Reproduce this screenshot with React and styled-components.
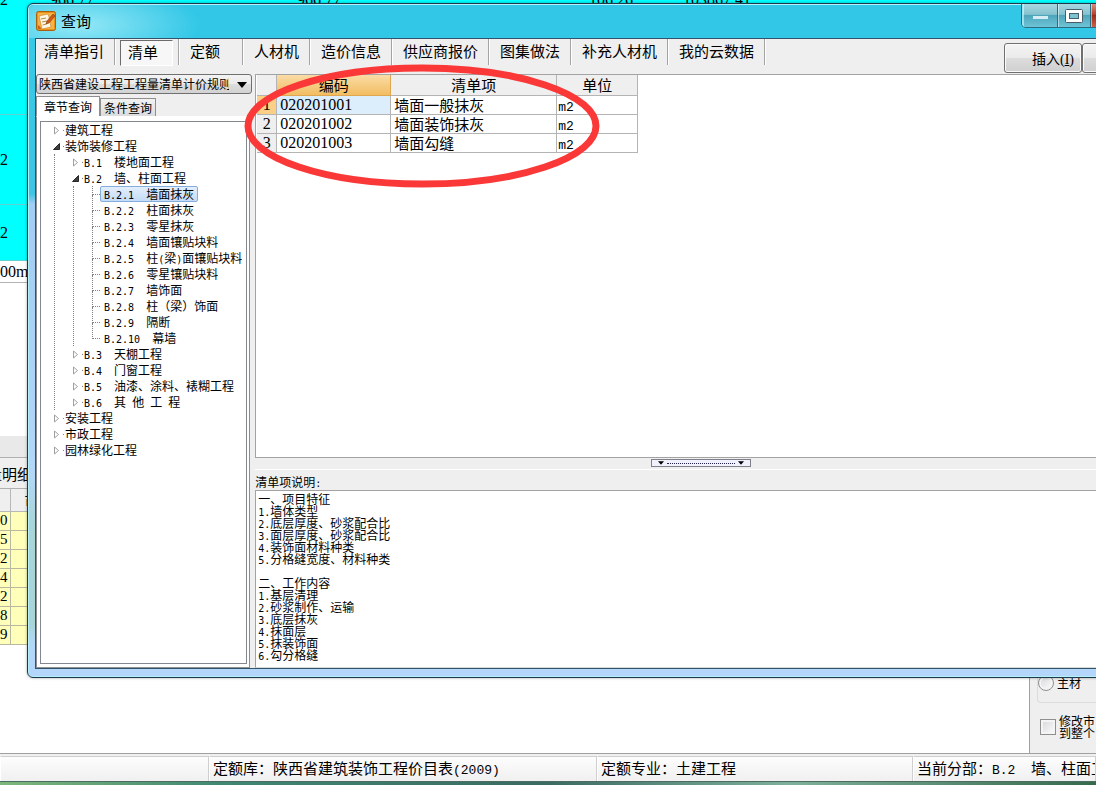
import React, { useState } from 'react';
import styled, { createGlobalStyle } from 'styled-components';

const GlobalStyle = createGlobalStyle`
  * {
    box-sizing: border-box;
  }

  body {
    margin: 0;
    color: #000;
    font-family: 'Noto Sans CJK SC', sans-serif;
    font-weight: 400;
    font-size: 12px;
  }

  button, select {
    font: inherit;
    color: inherit;
  }

  ul {
    list-style: none;
    margin: 0;
    padding: 0;
  }
`;

// Half-width characters: narrow fixed pitch beside the square CJK glyphs
const Half = styled.span`
  font-family: ${props => (props.$large ? "'Liberation Mono', monospace" : "'DejaVu Sans Mono', monospace")};
  font-size: ${props => (props.$large ? '13px' : '10px')};
  line-height: 1;
  white-space: pre;
`;

function Mixed({ text, large }) {
  const parts = text.split(/([\x20-\x7e]+)/).filter(Boolean);
  return parts.map((part, i) => (
    /^[\x20-\x7e]/.test(part) ? <Half key={i} $large={large}>{part}</Half> : part
  ));
}

/* ---------- main window behind the dialog ---------- */

const Desktop = styled.div`
  position: relative;
  display: flex;
  flex-direction: column;
  min-height: 100vh;
  overflow: hidden;
  background: #fff;
`;

const SheetStrip = styled.div`
  display: flex;
  height: 24px;
  margin-top: -12px;
  background: #00ffff;
  font: 16px/24px 'Liberation Serif', serif;
  white-space: nowrap;
`;

const StripCell = styled.span`
  flex: 0 0 ${props => props.$width}px;
`;

const SheetRow = styled.div`
  display: flex;
  align-items: center;
  height: ${props => props.$height}px;
  background: ${props => (props.$plain ? '#fff' : '#00ffff')};
  border-bottom: 1px solid ${props => (props.$plain ? '#b4b4b4' : '#5fd3d3')};
  font: 16px 'Liberation Serif', serif;
`;

const Filler = styled.div`
  flex: 1;
`;

const Band = styled.div`
  height: 22px;
  background: #e9e9e9;
  border-bottom: 1px solid #b0b0b0;
`;

const DetailTitle = styled.div`
  display: flex;
  align-items: center;
  height: 31px;
  background: #efefef;
  border-bottom: 1px solid #b0b0b0;
  font-size: 15px;
  text-indent: -13px;
`;

const Lower = styled.div`
  display: flex;
  height: 265px;
  border-bottom: 1px solid #a0a0a0;
`;

const DetailArea = styled.div`
  flex: 1;
  border-right: 1px solid #a0a0a0;
`;

const DetailTable = styled.table`
  border-collapse: collapse;
  table-layout: fixed;
  width: 90px;
  font: 15px 'Liberation Serif', serif;

  th {
    height: 22px;
    padding: 0 0 0 14px;
    background: #efefef;
    border: 1px solid #b8b8b8;
    border-width: 0 1px 1px 0;
    font: 15px 'Noto Sans CJK SC', sans-serif;
    line-height: 20px;
    text-align: left;
  }

  td {
    height: 19px;
    padding: 0;
    background: #ffffb9;
    border: 1px solid #b8b8a0;
    border-width: 0 1px 1px 0;
    line-height: 17px;
  }

  th:first-child {
    width: 10px;
    padding: 0;
  }
`;

const SidePanel = styled.div`
  display: flex;
  flex-direction: column;
  justify-content: flex-end;
  width: 66px;
  padding: 0 0 14px 7px;
  background: #efefef;
  white-space: nowrap;
`;

const RadioGroup = styled.div`
  padding-bottom: 11px;
  border: 1px solid #dcdcdc;
  border-width: 0 0 1px 1px;
  border-radius: 0 0 0 4px;
`;

const Choice = styled.label`
  display: flex;
  align-items: center;
  gap: 3px;
  line-height: 12px;

  input {
    flex: none;
    appearance: none;
    width: 16px;
    height: 16px;
    margin: 0;
    border: 1px solid #8e8f8f;
    border-radius: ${props => (props.$round ? '8px' : '0')};
    background: linear-gradient(135deg, #d3d6da, #fdfdfd);
    box-shadow: inset 0 0 0 2px #f4f4f4;
  }
`;

const CheckArea = styled.div`
  padding: 12px 0 0 3px;
`;

const StatusBar = styled.footer`
  display: grid;
  grid-template-columns: 209fr 388fr 316fr 183fr;
  height: 28px;
  padding-top: 2px;
  background: #f0f0f0;
  border-bottom: 1px solid #4c6c62;
  font-size: 15px;
`;

const StatusCell = styled.div`
  min-width: 0;
  overflow: hidden;
  padding-left: 3px;
  border: 1px solid #cfcfcf;
  border-left-color: #fff;
  border-bottom: 0;
  background: linear-gradient(#fdfdfd, #f0f0f0);
  line-height: 22px;
  white-space: nowrap;
`;

const DesktopEdge = styled.div`
  height: 3px;
  background: linear-gradient(90deg, #7fb77a, #3f8873 20%, #3a6a62 50%, #7fb09b 72%, #356a4b);
`;

/* ---------- dialog ---------- */

const Dialog = styled.div`
  position: absolute;
  top: 3px;
  left: 27px;
  right: -48px;
  bottom: 107px;
  display: flex;
  flex-direction: column;
  padding: 0 8px 8px;
  border: 1px solid #1c3a4c;
  border-radius: 6px;
  background: linear-gradient(#33cbe9, #3fc4e4 190px, #a2cdf4 200px, #b4d6fa 470px, #a9d5d8 520px, #a9d5d8 620px, #b4d6fa 640px);
  box-shadow: inset 0 0 0 1px #b4f0fa, 0 0 3px rgba(0, 0, 0, 0.35);
`;

const TitleBar = styled.header`
  display: flex;
  align-items: flex-start;
  height: 33px;
  margin: 1px -7px 0;
  padding-left: 7px;
  border-radius: 5px 5px 0 0;
  background:
    radial-gradient(ellipse 120px 40px at 50px 20px, rgba(160, 236, 248, 0.9), rgba(160, 236, 248, 0)),
    #33c7e7;
`;

const Title = styled.h1`
  margin: 4px 0 0 5px;
  font-size: 15px;
  font-weight: 400;
  line-height: 24px;
`;

const AppIcon = styled.svg`
  width: 20px;
  height: 20px;
  margin-top: 6px;
`;

const CaptionButtons = styled.div`
  display: flex;
  margin: -1px -1px 0 auto;
  border: 1px solid #2b6c80;
  border-top: 0;
  border-radius: 0 0 5px 5px;
  overflow: hidden;
`;

const CaptionButton = styled.button`
  display: flex;
  align-items: center;
  justify-content: center;
  width: ${props => props.$width}px;
  height: 23px;
  padding: 0;
  border: 0;
  border-left: 1px solid ${props => (props.$first ? '#a5e4ee' : '#2b6c80')};
  background: ${props => (props.$danger
    ? 'linear-gradient(#d98f80, #b8402c 45%, #a02c18 50%, #c9604c)'
    : 'linear-gradient(#a9d8e2, #85c2d0 45%, #4fa5ba 50%, #6ec4d6)')};
  box-shadow: inset 1px 0 0 rgba(255, 255, 255, 0.5);
`;

const Client = styled.div`
  flex: 1;
  min-height: 0;
  display: flex;
  flex-direction: column;
  border: 1px solid #33536a;
  border-right-width: 0;
  margin: 0 0 0 -1px;
  background: #efefef;
`;

const Toolbar = styled.nav`
  display: flex;
  align-items: flex-start;
  height: 35px;
`;

const ToolSlot = styled.div`
  display: flex;
  min-width: 64px;
  height: 26px;
  border-right: 1px solid #a3a3a3;
  box-shadow: 1px 0 0 #fff;

  &:first-child button {
    padding-left: 8px;
  }
`;

const ToolButton = styled.button`
  padding: 0 10px 2px 11px;
  border: 0;
  background: none;
  font-size: 15px;
  line-height: 24px;
  white-space: nowrap;

  &[aria-pressed='true'] {
    width: 53px;
    height: 26px;
    margin: 1px 0 0 5px;
    padding: 0 0 2px 7px;
    border: 1px solid #fff;
    border-top-color: #6c6c6c;
    border-left-color: #6c6c6c;
    background: #f7f7f7;
    line-height: 22px;
    text-align: left;
  }
`;

const Actions = styled.div`
  display: flex;
  margin: 4px 0 0 auto;
`;

const ActionButton = styled.button`
  width: ${props => props.$width}px;
  height: 30px;
  padding: 0 7px 0 0;
  border: 1px solid #707070;
  border-radius: 3px;
  background: linear-gradient(#f4f4f4, #ebebeb 48%, #dcdcdc 52%, #cfcfcf);
  box-shadow: inset 0 0 0 1px #fbfbfb;
  font-size: 14px;
  text-align: right;
`;

const AccessKey = styled.span`
  font-family: 'Liberation Serif', serif;

  u {
    text-underline-offset: 1px;
  }
`;

const Body = styled.div`
  flex: 1;
  min-height: 0;
  display: flex;
  gap: 3px;
`;

const SidePane = styled.aside`
  flex: 0 0 215px;
  display: flex;
  flex-direction: column;
`;

const LibrarySelect = styled.div`
  position: relative;
  height: 20px;
  margin-bottom: 2px;

  select {
    appearance: none;
    width: 100%;
    height: 20px;
    padding: 0 22px 0 2px;
    border: 1px solid #707070;
    border-radius: 3px;
    background: linear-gradient(#f3f3f3, #ebebeb 48%, #dddddd 52%, #d2d2d2);
    line-height: 18px;
  }

  svg {
    position: absolute;
    right: 5px;
    top: 8px;
    pointer-events: none;
  }
`;

const Tabs = styled.div`
  display: flex;
  align-items: flex-end;
  height: 20px;
`;

const Tab = styled.button`
  height: ${props => (props.$active ? 20 : 18)}px;
  padding: 0 ${props => (props.$active ? 7 : 3)}px;
  border: 1px solid #8f8f8f;
  border-bottom: 0;
  background: ${props => (props.$active ? '#fff' : 'linear-gradient(#f2f2f2, #dcdcdc)')};
  line-height: 16px;
  white-space: nowrap;
`;

const TabPage = styled.div`
  flex: 1;
  min-height: 0;
  display: flex;
  margin-right: 2px;
  padding: 4px 2px 3px 3px;
  border: 1px solid #8f8f8f;
  border-top-color: #fff;
  background: #fff;
`;

const TreeBox = styled.div`
  flex: 1;
  overflow: hidden;
  border: 1px solid #828790;
  line-height: 16px;
  white-space: nowrap;
`;

const TreeRow = styled.div`
  display: flex;
  align-items: center;
  height: 16px;
  padding-left: ${props => (props.$nested ? 17 : 12)}px;
`;

const Branch = styled.ul`
  margin-left: ${props => (props.$nested ? 18 : 13)}px;
  border-left: 1px dotted #808080;
`;

const Toggle = styled.button`
  display: flex;
  width: 8px;
  height: 9px;
  padding: 0;
  border: 0;
  background: none;
`;

const Tick = styled.span`
  width: 1px;
  height: 1px;
  margin: 0 1px 0 2px;
  background: #808080;
`;

const Leaf = styled.li`
  display: flex;
  height: 16px;
  padding-left: 18px;
`;

const Stub = styled.span`
  width: 8px;
  height: 16px;

  &::before {
    content: '';
    display: block;
    height: 8px;
    border: 1px dotted #808080;
    border-width: 0 0 1px 1px;
  }

  &::after {
    content: '';
    display: ${props => (props.$last ? 'none' : 'block')};
    height: 8px;
    border-left: 1px dotted #808080;
  }
`;

const LeafButton = styled.button`
  height: 16px;
  padding: 0 3px;
  border: 1px solid ${props => (props.$active ? '#84acdd' : 'transparent')};
  border-radius: 2px;
  background: ${props => (props.$active ? 'linear-gradient(#e3eefb, #c4dcf8)' : 'none')};
  line-height: 14px;
`;

const MainPane = styled.main`
  flex: 1;
  min-width: 0;
  display: flex;
  flex-direction: column;
`;

const GridArea = styled.div`
  flex: 1;
  min-height: 0;
  padding-left: 1px;
  border: 1px solid #a3a3a3;
  background: #fff;
`;

const ItemTable = styled.table`
  border-collapse: separate;
  border-spacing: 0;
  table-layout: fixed;
  width: 381px;
  font-size: 15px;

  th, td {
    padding: 0;
    border: 1px solid #b4b4b4;
    border-width: 0 1px 1px 0;
    font-weight: 400;
    white-space: nowrap;
  }

  th {
    height: 21px;
    background: #efefef;
    line-height: 20px;
  }

  td {
    height: 19px;
    padding-left: 3px;
    line-height: 18px;
  }
`;

const CodeHead = styled.th`
  && {
    background: linear-gradient(#fadca6, #f2bd62);
    border-color: #dfa850;
  }
`;

const IndexCell = styled.th`
  && {
    height: 19px;
    background: ${props => (props.$active ? '#fbcf86' : '#efefef')};
    font: 16px/18px 'Liberation Serif', serif;
  }
`;

const CodeCell = styled.td`
  background: ${props => (props.$active ? '#dcedfc' : '#fff')};
  font-family: 'Liberation Serif', serif;
  font-size: 16px;
`;

const UnitCell = styled.td`
  && {
    padding-left: 1px;
  }
`;

const Splitter = styled.div`
  display: flex;
  justify-content: center;
  height: 12px;
  padding: 1px 0 0;
  border-bottom: 1px solid #fff;
  cursor: row-resize;
`;

const SplitHandle = styled.button`
  display: flex;
  align-items: center;
  justify-content: space-between;
  width: 100px;
  height: 8px;
  margin-left: 12px;
  padding: 0 6px;
  border: 1px solid #808088;
  background: #f1f1fd;
`;

const SplitDots = styled.span`
  width: 68px;
  border-top: 1px dotted #22224a;
`;

const NoteTitle = styled.h2`
  height: 20px;
  margin: 0;
  font-size: 12px;
  font-weight: 400;
  line-height: 23px;
`;

const Notes = styled.div`
  height: 178px;
  padding: 2px 0 0 2px;
  border: 1px solid #a3a3a3;
  border-bottom-color: #d8d8d8;
  background: #fff;
`;

const NoteLine = styled.p`
  height: 12px;
  margin: 0;
  line-height: 12px;
  white-space: nowrap;
`;

const Highlight = styled.svg`
  position: absolute;
  left: 243px;
  top: 63px;
  width: 358px;
  height: 126px;
  pointer-events: none;
`;

const strip = [
  ['2', 50], ['966.77', 247], ['966.77', 292], ['106.26', 94], ['103867.41', 97],
];

const details = ['0', '5', '2', '4', '2', '8', '9'];

const tools = ['清单指引', '清单', '定额', '人材机', '造价信息', '供应商报价', '图集做法', '补充人材机', '我的云数据'];

const tree = [
  { name: '建筑工程' },
  {
    name: '装饰装修工程',
    children: [
      { name: 'B.1  楼地面工程' },
      {
        name: 'B.2  墙、柱面工程',
        children: [
          'B.2.1  墙面抹灰',
          'B.2.2  柱面抹灰',
          'B.2.3  零星抹灰',
          'B.2.4  墙面镶贴块料',
          'B.2.5  柱(梁)面镶贴块料',
          'B.2.6  零星镶贴块料',
          'B.2.7  墙饰面',
          'B.2.8  柱（梁）饰面',
          'B.2.9  隔断',
          'B.2.10  幕墙',
        ],
      },
      { name: 'B.3  天棚工程' },
      { name: 'B.4  门窗工程' },
      { name: 'B.5  油漆、涂料、裱糊工程' },
      { name: 'B.6  其 他 工 程' },
    ],
  },
  { name: '安装工程' },
  { name: '市政工程' },
  { name: '园林绿化工程' },
];

const items = [
  ['020201001', '墙面一般抹灰', 'm2'],
  ['020201002', '墙面装饰抹灰', 'm2'],
  ['020201003', '墙面勾缝', 'm2'],
];

const notes = [
  '一、项目特征',
  '1.墙体类型',
  '2.底层厚度、砂浆配合比',
  '3.面层厚度、砂浆配合比',
  '4.装饰面材料种类',
  '5.分格缝宽度、材料种类',
  '',
  '二、工作内容',
  '1.基层清理',
  '2.砂浆制作、运输',
  '3.底层抹灰',
  '4.抹面层',
  '5.抹装饰面',
  '6.勾分格缝',
];

function Arrow({ open }) {
  return (
    <svg width="8" height="9" viewBox="0 0 8 9">
      {open
        ? <path d="M6.5 1.5v6h-6z" fill="#404040" stroke="#262626" />
        : <path d="M1.5 1v7L5.5 4.5z" fill="#fff" stroke="#a0a0a0" />}
    </svg>
  );
}

function DownMark({ width, height }) {
  return (
    <svg width={width} height={height} viewBox="0 0 10 6">
      <path d="M0 0h10L5 6z" fill="#000" />
    </svg>
  );
}

function TreeNode({ node, nested, selected, onSelect }) {
  const [open, setOpen] = useState(Boolean(node.children));
  const expanded = open && Boolean(node.children);

  return (
    <li>
      <TreeRow $nested={nested}>
        <Toggle aria-label={node.name} aria-expanded={expanded} onClick={() => setOpen(!open)}>
          <Arrow open={expanded} />
        </Toggle>
        <Tick />
        <span><Mixed text={node.name} /></span>
      </TreeRow>
      {expanded && (
        <Branch $nested={nested}>
          {node.children.map((child, i) => (
            typeof child === 'string' ? (
              <Leaf key={child}>
                <Stub $last={i === node.children.length - 1} />
                <LeafButton $active={child === selected} onClick={() => onSelect(child)}>
                  <Mixed text={child} />
                </LeafButton>
              </Leaf>
            ) : (
              <TreeNode key={child.name} node={child} nested selected={selected} onSelect={onSelect} />
            )
          ))}
        </Branch>
      )}
    </li>
  );
}

function MainWindow() {
  return (
    <>
      <SheetStrip>
        {strip.map(([text, width], i) => (
          <StripCell key={i} $width={width}>{text}</StripCell>
        ))}
      </SheetStrip>
      <SheetRow $height={103} />
      <SheetRow $height={90}>2</SheetRow>
      <SheetRow $height={56}>2</SheetRow>
      <SheetRow $height={22} $plain>00m</SheetRow>
      <Filler />
      <Band />
      <DetailTitle>量明细</DetailTitle>
      <Lower>
        <DetailArea>
          <DetailTable>
            <thead>
              <tr>
                <th />
                <th>市</th>
              </tr>
            </thead>
            <tbody>
              {details.map((value, i) => (
                <tr key={i}>
                  <td>{value}</td>
                  <td />
                </tr>
              ))}
            </tbody>
          </DetailTable>
        </DetailArea>
        <SidePanel>
          <RadioGroup>
            <Choice $round>
              <input type="radio" name="kind" />
              主材
            </Choice>
          </RadioGroup>
          <CheckArea>
            <Choice>
              <input type="checkbox" />
              <span>修改市<br />到整个</span>
            </Choice>
          </CheckArea>
        </SidePanel>
      </Lower>
      <StatusBar>
        <StatusCell />
        <StatusCell><Mixed large text="定额库：陕西省建筑装饰工程价目表(2009)" /></StatusCell>
        <StatusCell><Mixed large text="定额专业：土建工程" /></StatusCell>
        <StatusCell><Mixed large text="当前分部：B.2  墙、柱面工程" /></StatusCell>
      </StatusBar>
      <DesktopEdge />
    </>
  );
}

function QueryDialog() {
  const [tool, setTool] = useState('清单');
  const [tab, setTab] = useState('章节查询');
  const [section, setSection] = useState('B.2.1  墙面抹灰');

  return (
    <Dialog role="dialog" aria-label="查询">
      <TitleBar>
        <AppIcon viewBox="0 0 20 20">
          <rect x="0.5" y="0.5" width="19" height="19" rx="2" fill="#e8921c" stroke="#a9600f" />
          <path d="M2 2h16v16H2z" fill="#f6b444" />
          <path d="M3 5l9-2 1 3 2 10-9 2z" fill="#fff8e4" stroke="#c98024" strokeWidth="0.6" />
          <path d="M5 8l5-1M6 11l5-1M6.500 14l4-1" stroke="#b98a4a" strokeWidth="1" />
          <path d="M17 3l-6 7-1 3 3-1 6-7z" fill="#d2571a" stroke="#7d3a0c" strokeWidth="0.6" />
          <path d="M2 14c2 1 3 3 3 4H2z" fill="#c9640f" />
        </AppIcon>
        <Title>查询</Title>
        <CaptionButtons>
          <CaptionButton $first $width={35} aria-label="最小化">
            <svg width="17" height="6" viewBox="0 0 17 6">
              <rect x="1" y="3" width="15" height="3" fill="#d4edf2" />
            </svg>
          </CaptionButton>
          <CaptionButton $width={33} aria-label="最大化">
            <svg width="18" height="14" viewBox="0 0 18 14">
              <rect x="0.5" y="0.5" width="17" height="13" rx="1" fill="#fff" stroke="#4a5c68" />
              <rect x="4.500" y="4.500" width="9" height="5" fill="#7cc3d2" stroke="#4a5c68" />
            </svg>
          </CaptionButton>
          <CaptionButton $danger $width={52} aria-label="关闭" />
        </CaptionButtons>
      </TitleBar>
      <Client>
        <Toolbar>
          {tools.map(name => (
            <ToolSlot key={name}>
              <ToolButton aria-pressed={name === tool} onClick={() => setTool(name)}>{name}</ToolButton>
            </ToolSlot>
          ))}
          <Actions>
            <ActionButton $width={78}>插入<AccessKey>(<u>I</u>)</AccessKey></ActionButton>
            <ActionButton $width={53} aria-label="关闭" />
          </Actions>
        </Toolbar>
        <Body>
          <SidePane>
            <LibrarySelect>
              <select aria-label="清单库">
                <option>陕西省建设工程工程量清单计价规则</option>
              </select>
              <DownMark width={10} height={6} />
            </LibrarySelect>
            <Tabs>
              {['章节查询', '条件查询'].map(name => (
                <Tab key={name} $active={name === tab} onClick={() => setTab(name)}>{name}</Tab>
              ))}
            </Tabs>
            <TabPage>
              <TreeBox>
                <ul>
                  {tree.map(node => (
                    <TreeNode key={node.name} node={node} selected={section} onSelect={setSection} />
                  ))}
                </ul>
              </TreeBox>
            </TabPage>
          </SidePane>
          <MainPane>
            <GridArea>
              <ItemTable>
                <colgroup>
                  <col width="20" />
                  <col width="114" />
                  <col width="166" />
                  <col width="81" />
                </colgroup>
                <thead>
                  <tr>
                    <th />
                    <CodeHead>编码</CodeHead>
                    <th>清单项</th>
                    <th>单位</th>
                  </tr>
                </thead>
                <tbody>
                  {items.map(([code, name, unit], i) => (
                    <tr key={code}>
                      <IndexCell $active={i === 0}>{i + 1}</IndexCell>
                      <CodeCell $active={i === 0}>{code}</CodeCell>
                      <td>{name}</td>
                      <UnitCell><Half $large>{unit}</Half></UnitCell>
                    </tr>
                  ))}
                </tbody>
              </ItemTable>
            </GridArea>
            <Splitter>
              <SplitHandle aria-label="清单项说明">
                <DownMark width={6} height={4} />
                <SplitDots />
                <DownMark width={6} height={4} />
              </SplitHandle>
            </Splitter>
            <NoteTitle><Mixed text="清单项说明:" /></NoteTitle>
            <Notes>
              {notes.map((line, i) => (
                <NoteLine key={i}><Mixed text={line} /></NoteLine>
              ))}
            </Notes>
          </MainPane>
        </Body>
      </Client>
    </Dialog>
  );
}

function App() {
  return (
    <Desktop>
      <GlobalStyle />
      <MainWindow />
      <QueryDialog />
      <Highlight viewBox="0 0 358 126">
        <ellipse cx="179" cy="63" rx="174" ry="58" fill="none" stroke="#fb3838" strokeWidth="7" />
      </Highlight>
    </Desktop>
  );
}

export default App;
